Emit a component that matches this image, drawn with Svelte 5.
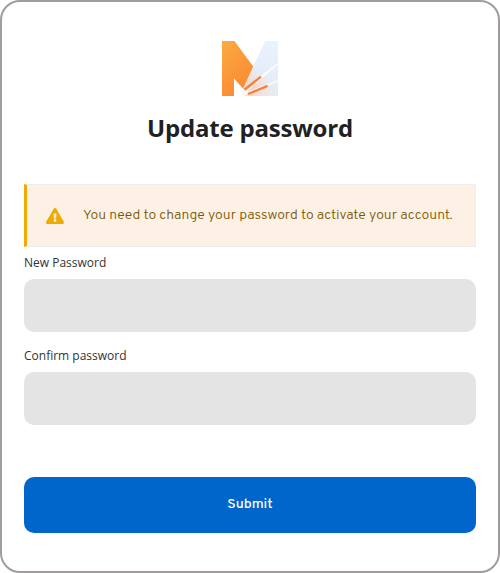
<script>
  let password = $state('');
  let confirmation = $state('');
</script>

<main class="card">
  <header>
    <svg class="logo" width="56" height="55" viewBox="0 0 56 55" aria-hidden="true">
      <defs>
        <linearGradient id="orange" x1="0" y1="0" x2="0.55" y2="1">
          <stop offset="0" stop-color="#fdaa40" />
          <stop offset="1" stop-color="#f98a33" />
        </linearGradient>
        <linearGradient id="ice" x1="0.8" y1="0" x2="0.45" y2="1">
          <stop offset="0" stop-color="#eaf3fd" />
          <stop offset="0.6" stop-color="#e5edf8" />
          <stop offset="1" stop-color="#eee8e8" />
        </linearGradient>
        <radialGradient id="glow" gradientUnits="userSpaceOnUse" cx="29" cy="48" r="21">
          <stop offset="0" stop-color="#f8c9b0" stop-opacity="0.85" />
          <stop offset="1" stop-color="#f3dfd8" stop-opacity="0" />
        </radialGradient>
      </defs>
      <path d="M43.5 0H56V55H20L21 47L31 25.5Z" fill="url(#ice)" />
      <path d="M43.5 0H56V55H20L21 47L31 25.5Z" fill="url(#glow)" />
      <path d="M0 0H12.5L31.2 25.5L21 47.5L12 37.5V55H0Z" fill="url(#orange)" />
      <path d="M21 49L56 21.5V23.5L25 50.5L56 39V40.5L26 53L22 55H19Z" fill="#fff" fill-opacity="0.75" />
      <path d="M22.5 48.8L39 35.6" stroke="#f5813b" stroke-width="2.4" />
      <path d="M26 53L45.5 44.8" stroke="#f5813b" stroke-width="2.4" />
    </svg>
    <h1>Update password</h1>
  </header>

  <div class="alert" role="alert">
    <svg width="18" height="16" viewBox="0 0 576 512" aria-hidden="true">
      <path fill="#f0ab00" d="M569.517 440.013C587.975 472.007 564.806 512 527.94 512H48.054c-36.937 0-59.999-40.055-41.577-71.987L246.423 23.985c18.467-32.009 64.72-31.951 83.154 0l239.94 416.028zM288 354c-25.405 0-46 20.595-46 46s20.595 46 46 46 46-20.595 46-46-20.595-46-46-46zm-43.673-165.346l7.418 136c.347 6.364 5.609 11.346 11.982 11.346h48.546c6.373 0 11.635-4.982 11.982-11.346l7.418-136c.375-6.874-5.098-12.654-11.982-12.654h-63.383c-6.884 0-12.356 5.78-11.981 12.654z" />
    </svg>
    <span>You need to change your password to activate your account.</span>
  </div>

  <form onsubmit={(event) => event.preventDefault()}>
    <label for="password">New Password</label>
    <input id="password" type="password" bind:value={password} />
    <label class="second" for="confirmation">Confirm password</label>
    <input id="confirmation" type="password" bind:value={confirmation} />
    <button type="submit">Submit</button>
  </form>
</main>

<style>
  .card {
    box-sizing: border-box;
    width: 500px;
    height: 573px;
    padding: 39px 22px 0;
    border: 2px solid #a19c9d;
    border-radius: 20px;
    background: #fff;
    font-family: "Open Sans", "Noto Sans", sans-serif;
  }
  header {
    display: flex;
    flex-direction: column;
    align-items: center;
    height: 143px;
  }
  .logo {
    display: block;
    flex: none;
  }
  h1 {
    margin: 15px 0 0;
    color: #212121;
    font-size: 24px;
    font-weight: 700;
    letter-spacing: -0.2px;
    line-height: 33px;
    white-space: nowrap;
  }
  .alert {
    display: flex;
    align-items: center;
    box-sizing: border-box;
    height: 63px;
    padding-left: 19px;
    border: 1px solid #ededed;
    border-left: 3px solid #f0ab00;
    background: #fdf0e5;
  }
  .alert svg {
    flex: none;
    margin-top: 1px;
  }
  .alert span {
    margin: 0 0 0 19px;
    color: #795600;
    font: 300 14px/20px Overpass, Roboto, sans-serif;
    letter-spacing: -0.025px;
    white-space: nowrap;
  }
  form {
    display: flex;
    flex-direction: column;
  }
  label {
    height: 18px;
    margin: 7px 0;
    color: #333;
    font-size: 12px;
    line-height: 18px;
  }
  label.second {
    margin-top: 15px;
  }
  input {
    box-sizing: border-box;
    width: 100%;
    height: 53px;
    padding: 0 16px;
    border: 0;
    border-radius: 10px;
    background: #e4e4e4;
    font: inherit;
  }
  button {
    height: 56px;
    margin-top: 52px;
    padding: 0;
    border: 0;
    border-radius: 10px;
    background: #06c;
    color: #fff;
    font: 500 14px/20px Overpass, Roboto, sans-serif;
    letter-spacing: 0;
  }
</style>
